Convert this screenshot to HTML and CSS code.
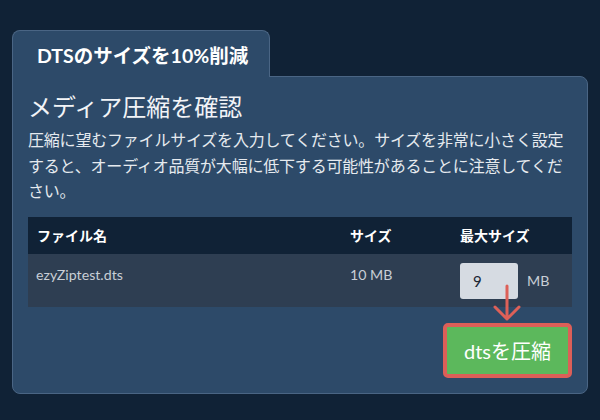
FILE: index.html
```html
<!DOCTYPE html>
<html lang="ja">
<head>
<meta charset="utf-8">
<title>DTSのサイズを10%削減</title>
<link rel="stylesheet" href="styles.css">
</head>
<body>
<div class="page">
  <div class="tab">DTSのサイズを10%削減</div>
  <div class="panel">
    <h1 class="heading">メディア圧縮を確認</h1>
    <p class="desc">圧縮に望むファイルサイズを入力してください。サイズを非常に小さく設定すると、オーディオ品質が大幅に低下する可能性があることに注意してください。</p>
    <div class="table">
      <div class="row head">
        <div class="cell">ファイル名</div>
        <div class="cell">サイズ</div>
        <div class="cell">最大サイズ</div>
      </div>
      <div class="row body">
        <div class="cell name">ezyZiptest.dts</div>
        <div class="cell">10 MB</div>
        <div class="cell max"><span class="input">9</span><span class="unit">MB</span></div>
      </div>
    </div>
    <div class="actions">
      <button class="btn">dtsを圧縮</button>
      <svg class="arrow" width="30" height="38" viewBox="0 0 30 38">
        <path d="M15 2 V35 M3 23 L15 35 L27 23" fill="none" stroke="#dd6058" stroke-width="3" stroke-linecap="round" stroke-linejoin="round"/>
      </svg>
    </div>
  </div>
</div>
</body>
</html>
```
FILE: styles.css
```css
* { box-sizing: border-box; }
html, body {
  margin: 0;
  padding: 0;
  background: #102236;
  width: 600px;
  height: 420px;
  overflow: hidden;
}
body {
  font-family: Lato, "Noto Sans CJK JP", sans-serif;
  color: #ffffff;
}
.page {
  padding: 30px 0 0 12px;
  width: 588px;
}
.tab {
  position: relative;
  z-index: 2;
  width: 258px;
  height: 47px;
  margin-bottom: -1px;
  padding: 10px 0 0 24px;
  background: #2d4a69;
  border: 1px solid #4a6584;
  border-bottom: none;
  border-radius: 8px 8px 0 0;
  font-size: 19.5px;
  font-weight: 700;
  line-height: 30px;
  white-space: nowrap;
}
.panel {
  position: relative;
  background: #2d4a69;
  border: 1px solid #4a6584;
  border-radius: 0 8px 8px 8px;
  padding: 15px 15px 15px 15px;
  height: 318px;
}
.heading {
  margin: 0;
  font-size: 24px;
  font-weight: 400;
  line-height: 30px;
  color: #f2f4f7;
}
.desc {
  margin: 5px 0 0 0;
  font-size: 16px;
  letter-spacing: -0.2px;
  line-height: 25.5px;
  color: #e6eaef;
}
.table {
  margin-top: 13px;
  width: 544px;
}
.row {
  display: grid;
  grid-template-columns: 313px 110px 121px;
}
.cell { padding-left: 9px; }
.row.head {
  background: #102236;
  height: 37px;
  align-items: center;
  font-size: 14px;
  font-weight: 700;
  color: #ffffff;
}
.row.body {
  background: #2e3e52;
  height: 53px;
  font-size: 14.2px;
  line-height: 18px;
  color: #c8ced6;
  align-items: start;
}
.row.body .cell { padding-top: 12px; }
.row.body .name { padding-left: 8px; }
.row.body .max {
  display: flex;
  align-items: center;
  padding-top: 9px;
}
.input {
  display: inline-block;
  width: 58px;
  height: 36px;
  padding-left: 13px;
  background: #d6dbe2;
  border-radius: 3px;
  color: #1b2735;
  font-size: 15px;
  line-height: 36px;
}
.unit {
  margin-left: 9px;
  font-size: 14.2px;
  color: #c8ced6;
}
.actions {
  position: relative;
  display: flex;
  justify-content: flex-end;
  width: 544px;
  margin-top: 16px;
}
.btn {
  width: 129px;
  height: 55px;
  background: #5cb85c;
  border: 4px solid #dc5f58;
  border-radius: 5px;
  color: #ffffff;
  font-family: Lato, "Noto Sans CJK JP", sans-serif;
  font-size: 20px;
  padding: 0;
}
.arrow {
  position: absolute;
  left: 464px;
  top: -39px;
}
```
